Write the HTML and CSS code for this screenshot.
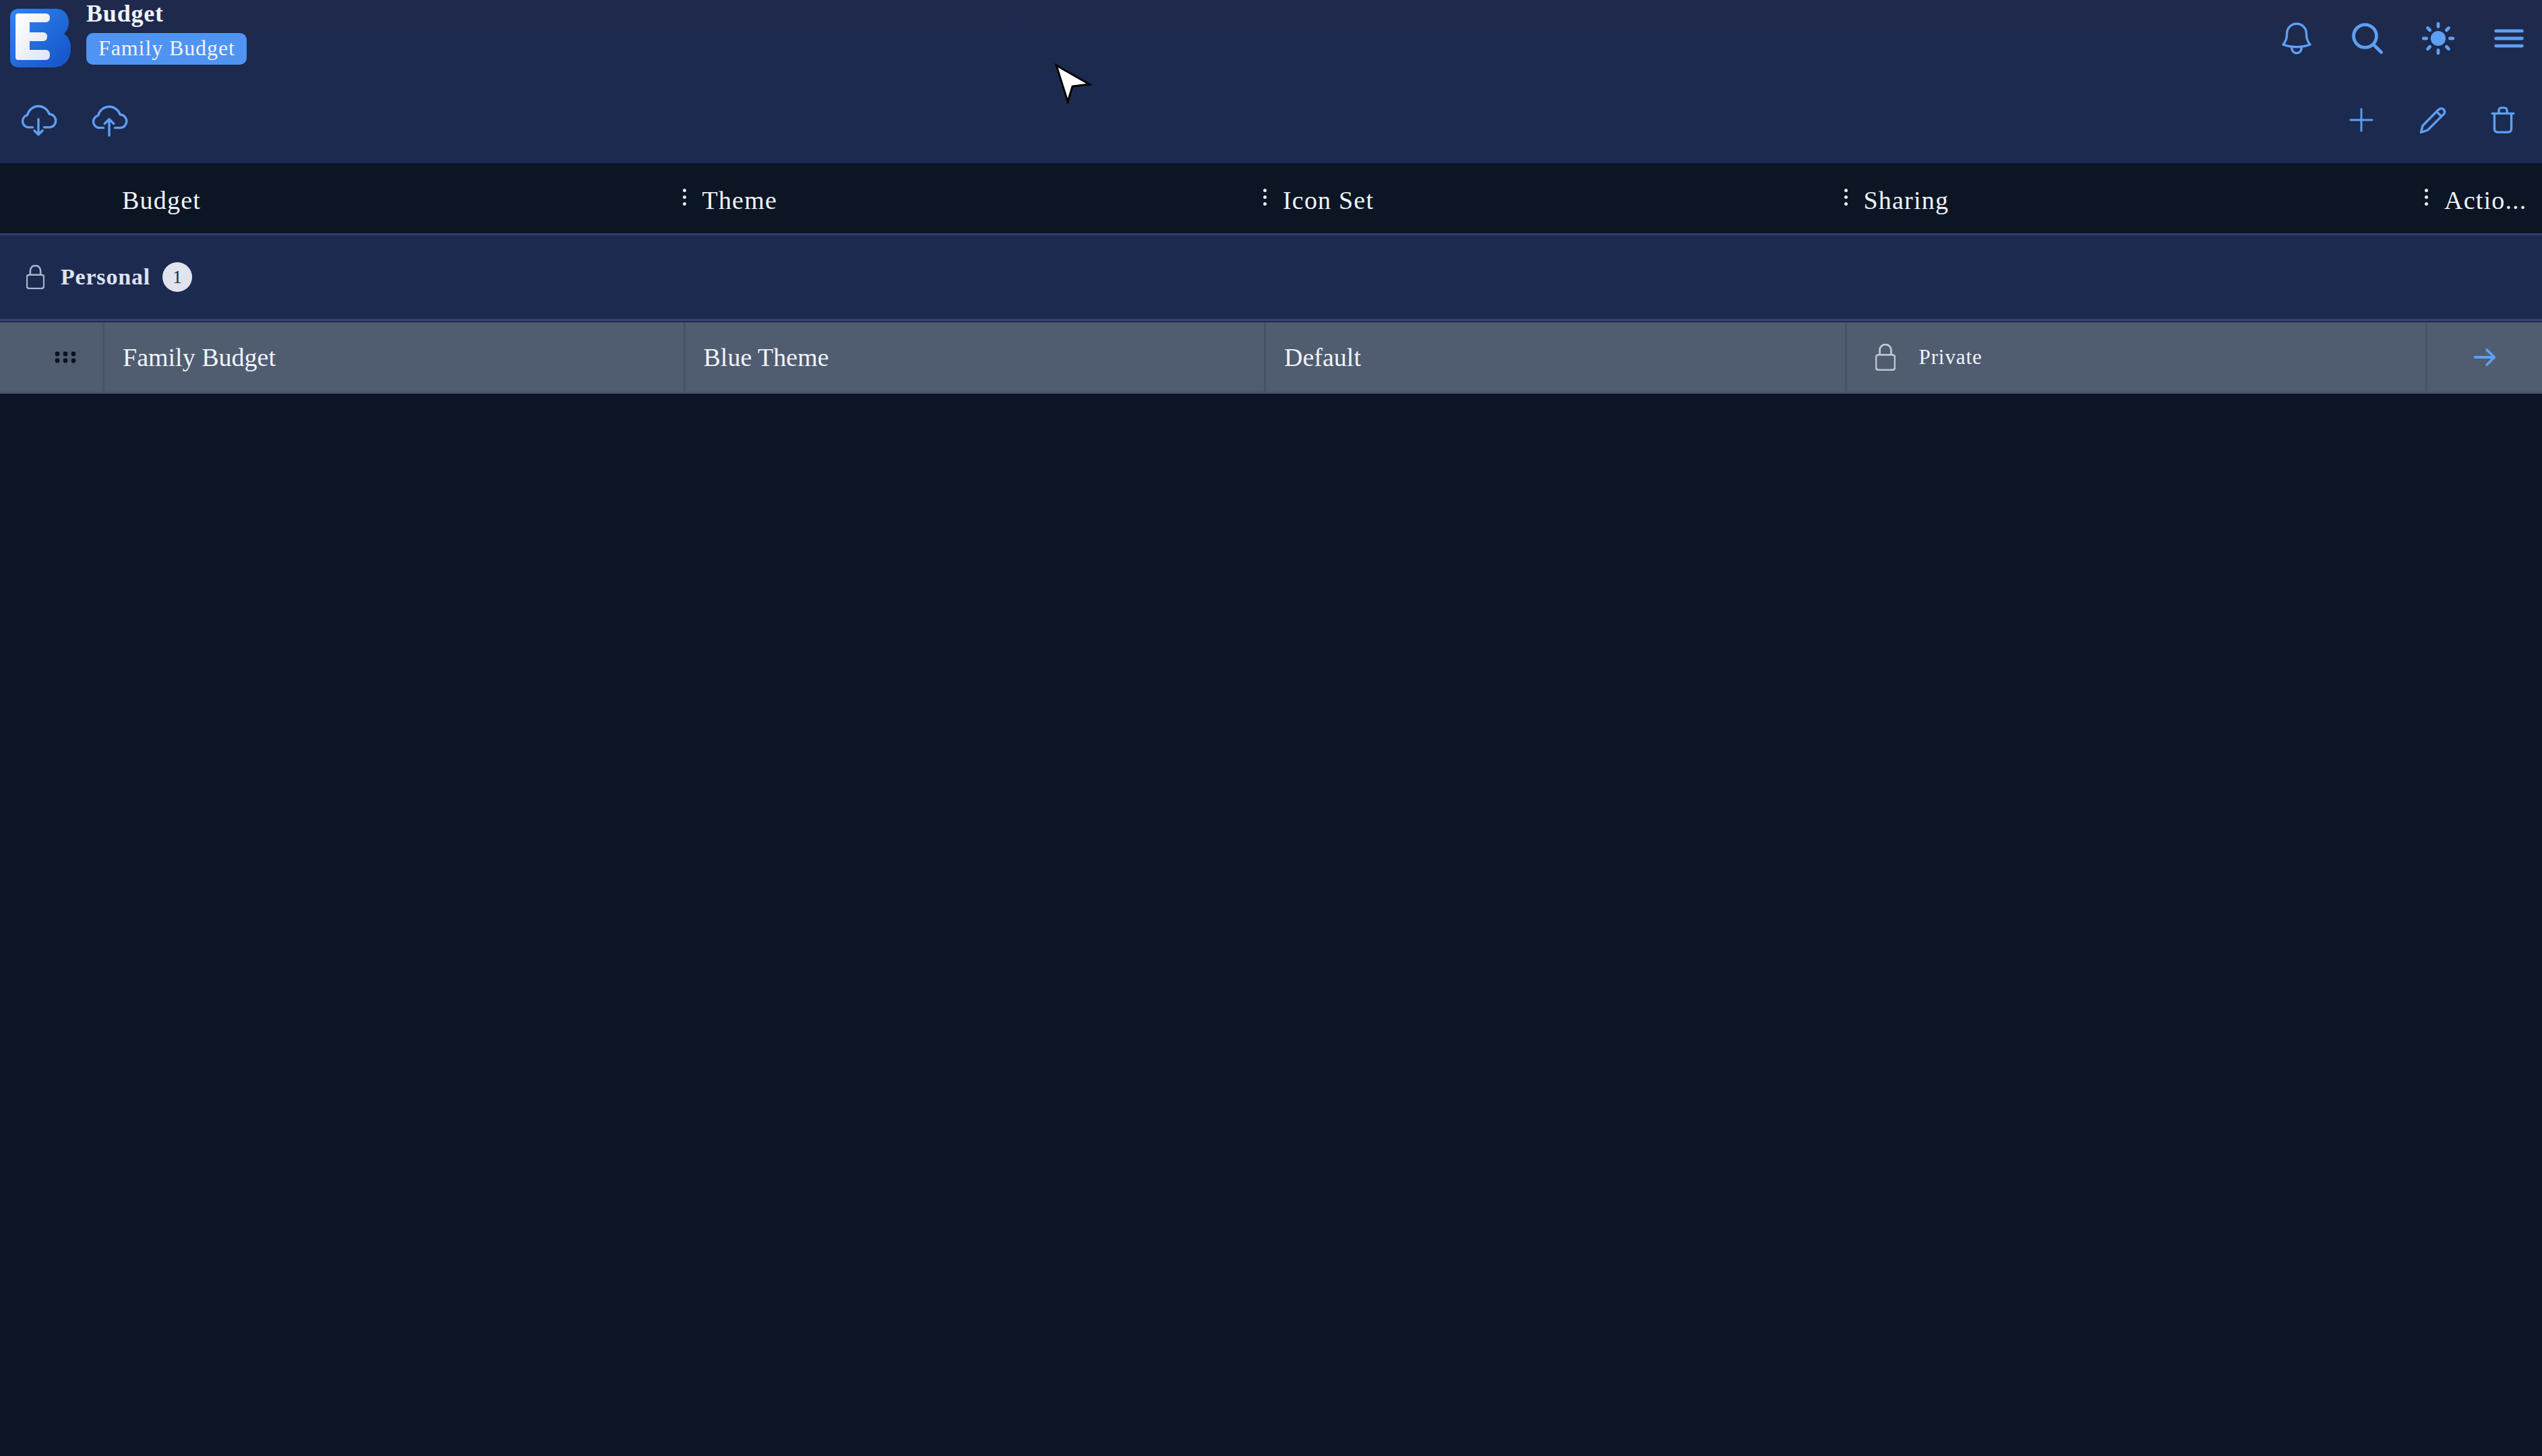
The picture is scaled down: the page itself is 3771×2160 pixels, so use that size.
FILE: index.html
```html
<!DOCTYPE html>
<html lang="en">
<head>
<meta charset="utf-8">
<title>Budget</title>
<link rel="stylesheet" href="styles.css">
</head>
<body>
<header class="topbar">
  <div class="toprow">
    <div class="brand">
      <svg class="logo" viewBox="0 0 92 90">
        <defs>
          <linearGradient id="lg" x1="0" y1="0" x2="1" y2="1"><stop offset="0" stop-color="#2f86f0"/><stop offset="1" stop-color="#1452c8"/></linearGradient>
          <linearGradient id="lw" x1="0" y1="0" x2="1" y2="1"><stop offset="0" stop-color="#ffffff"/><stop offset="1" stop-color="#dfe4f2"/></linearGradient>
        </defs>
        <path fill="url(#lg)" d="M14 1H68C82 1 88 10 88 22C88 29 85 34 81 38C87 42 91 49 91 60C91 78 80 88 64 88H14C6 88 1 83 1 75V14C1 6 6 1 14 1Z"/>
        <path fill="url(#lw)" d="M13 8H54Q60 8 60 14.500Q60 21 54 21H30V36H50Q56 36 56 42.500Q56 49 50 49H30V62H54Q60 62 60 69.500Q60 77 54 77H13Q9 77 9 73V12Q9 8 13 8Z"/>
      </svg>
      <div class="titles">
        <div class="title">Budget</div>
        <div class="badge">Family Budget</div>
      </div>
    </div>
    <div class="icons">
      <button class="iconbtn"><svg viewBox="0 0 24 24"><path d="M14.86 17.08a24 24 0 0 0 5.45-1.31A8.97 8.97 0 0 1 18 9.75V9a6 6 0 0 0-12 0v.75a8.97 8.97 0 0 1-2.31 6.02 24 24 0 0 0 5.45 1.31m5.72 0a24.25 24.25 0 0 1-5.72 0m5.72 0a3 3 0 1 1-5.72 0"/></svg></button>
      <button class="iconbtn"><svg class="heavy" viewBox="0 0 24 24"><path d="m20.500 20.500-5-5m0 0A7 7 0 1 0 5.600 5.600a7 7 0 0 0 9.900 9.900Z"/></svg></button>
      <button class="iconbtn"><svg class="heavy" viewBox="0 0 24 24"><circle class="solid" cx="12" cy="12" r="4.600"/><path d="M12 3v1.800M12 19.200V21M3 12h1.800M19.200 12H21M5.600 5.600l1.300 1.300M17.100 17.100l1.300 1.300M5.600 18.400l1.300-1.300M17.100 6.900l1.300-1.300"/></svg></button>
      <button class="iconbtn"><svg class="heavy" viewBox="0 0 24 24"><path d="M4 7.400h16M4 12h16M4 16.600h16"/></svg></button>
    </div>
  </div>
  <div class="toolrow">
    <div class="tools">
      <button class="iconbtn"><svg viewBox="0 0 24 24"><path d="M8.500 16.500H6a3.800 3.800 0 0 1-.8-7.500 7 7 0 0 1 13.500-.6 4 4 0 0 1-.2 8.100H15.500M12 11.500V21m0 0-2.500-2.500M12 21l2.500-2.500"/></svg></button>
      <button class="iconbtn"><svg viewBox="0 0 24 24"><path d="M8.500 16.800H6a3.800 3.800 0 0 1-.8-7.500 7 7 0 0 1 13.500-.6 4 4 0 0 1-.2 8.100H15.500M12 21.500V11.500m0 0-2.800 2.800m2.800-2.800 2.800 2.800"/></svg></button>
    </div>
    <div class="tools">
      <button class="iconbtn"><svg class="thin" viewBox="0 0 24 24"><path d="M12 5.300v13.400M5.300 12h13.400"/></svg></button>
      <button class="iconbtn"><svg viewBox="0 0 24 24"><path d="M15.300 6.200 16.600 5.200a2.100 2.100 0 0 1 2.800 2.900L9.300 18.200 5.200 19.600 6.200 15.500 15.300 6.200ZM14.700 6.800l3 3"/></svg></button>
      <button class="iconbtn"><svg viewBox="0 0 24 24"><path d="M5.400 8h13.200M6.800 8v9.500a2 2 0 0 0 2 2h6.400a2 2 0 0 0 2-2V8M9.500 8V6a1.500 1.500 0 0 1 1.500-1.500h2A1.500 1.500 0 0 1 14.500 6v2"/></svg></button>
    </div>
  </div>
</header>

<main class="table">
  <div class="grid head">
    <div class="hcell"></div>
    <div class="hcell first">Budget</div>
    <div class="hcell"><span class="kebab"></span>Theme</div>
    <div class="hcell"><span class="kebab"></span>Icon Set</div>
    <div class="hcell"><span class="kebab"></span>Sharing</div>
    <div class="hcell"><span class="kebab"></span>Actio...</div>
  </div>
  <div class="group">
    <svg class="lock muted" viewBox="4 1.800 16 21.300"><path d="M7.500 10.500V6.800a4.500 4.500 0 0 1 9 0v3.700M6.500 10.500h11a2 2 0 0 1 2 2v8a2 2 0 0 1-2 2h-11a2 2 0 0 1-2-2v-8a2 2 0 0 1 2-2Z"/></svg>
    <span class="gname">Personal</span>
    <span class="count">1</span>
  </div>
  <div class="grid row">
    <div class="cell drag"><svg viewBox="0 0 32 18"><g class="dots"><circle cx="4" cy="4" r="3.400"/><circle cx="16" cy="4" r="3.400"/><circle cx="28" cy="4" r="3.400"/><circle cx="4" cy="14" r="3.400"/><circle cx="16" cy="14" r="3.400"/><circle cx="28" cy="14" r="3.400"/></g></svg></div>
    <div class="cell">Family Budget</div>
    <div class="cell">Blue Theme</div>
    <div class="cell">Default</div>
    <div class="cell share">
      <svg class="lock plain" viewBox="4 1.800 16 21.300"><path d="M7.500 10.500V6.800a4.500 4.500 0 0 1 9 0v3.700M6.500 10.500h11a2 2 0 0 1 2 2v8a2 2 0 0 1-2 2h-11a2 2 0 0 1-2-2v-8a2 2 0 0 1 2-2Z"/></svg>
      <span class="private">Private</span>
    </div>
    <div class="cell action"><svg viewBox="0 0 24 24"><path d="M3 12h18m0 0-7-7m7 7-7 7"/></svg></div>
  </div>
</main>

<svg class="cursor" viewBox="0 0 60 64"><path d="M6 6 55 34 30 37 23 60Z"/></svg>
</body>
</html>
```
FILE: styles.css
```css
* { box-sizing: border-box; }
html, body { height: 100%; }
body {
  margin: 0;
  background: #0d1527;
  color: #f1f4fa;
  font-family: "Liberation Serif", "DejaVu Serif", serif;
  font-size: 38px;
  overflow: hidden;
  position: relative;
}
.topbar {
  height: 242px;
  background: linear-gradient(180deg, #1f294c 0%, #1b2a4e 50%, #1c2a50 100%);
  display: flex;
  flex-direction: column;
}
.toprow {
  height: 120px;
  display: flex;
  justify-content: space-between;
  align-items: flex-start;
  padding-left: 14px;
  padding-right: 20px;
}
.brand { display: flex; gap: 22px; }
.logo { width: 92px; height: 90px; margin-top: 12px; display: block; }
.titles { display: flex; flex-direction: column; align-items: flex-start; }
.title { font-weight: 700; font-size: 36px; line-height: 42px; margin-top: -1px; height: 50px; letter-spacing: .8px; }
.badge {
  background: #4f93f3;
  border-radius: 10px;
  height: 47px;
  line-height: 45px;
  padding: 0 17px 0 18px;
  font-size: 32px;
  letter-spacing: .9px;
  white-space: nowrap;
}
.icons { display: flex; gap: 47px; margin-top: 28px; }
.toolrow {
  height: 122px;
  display: flex;
  justify-content: space-between;
  padding: 29px 29px 0 28px;
}
.tools { display: flex; gap: 47px; }
.iconbtn {
  background: none;
  border: 0;
  padding: 0;
  width: 58px;
  height: 58px;
  display: block;
}
.iconbtn svg, .action svg, .lock {
  width: 100%;
  height: 100%;
  display: block;
  fill: none;
  stroke: #5e9ff3;
  stroke-width: 1.400;
  stroke-linecap: round;
  stroke-linejoin: round;
}
.iconbtn svg.thin { stroke-width: 1.200; }
.iconbtn svg.heavy { stroke-width: 2; }
.iconbtn svg .solid { fill: #5e9ff3; stroke: none; }

.grid {
  display: grid;
  grid-template-columns: 152px repeat(4, 861.500px) 1fr;
}
.head {
  height: 104px;
  background: #0c1524;
}
.hcell {
  position: relative;
  padding-left: 28px;
  line-height: 110px;
  white-space: nowrap;
  letter-spacing: 1.200px;
}
.hcell.first { padding-left: 29px; }
.kebab {
  position: absolute;
  left: -1px;
  top: 38px;
  width: 5px;
  height: 5px;
  border-radius: 50%;
  background: #e8ecf4;
  box-shadow: 0 10px 0 #e8ecf4, 0 20px 0 #e8ecf4;
}
.group {
  height: 131px;
  border-top: 3px solid #313d6c;
  border-bottom: 4px solid #343f70;
  background: #1d2a50;
  display: flex;
  align-items: center;
  padding-left: 39px;
}
.lock.muted { width: 27px; height: 36px; stroke: #aab4cb; stroke-width: 1.500; margin-right: 24px; }
.gname { font-weight: 700; font-size: 34px; color: #dde3f0; letter-spacing: .8px; }
.count {
  width: 44px;
  height: 44px;
  border-radius: 50%;
  background: #e1e4ec;
  color: #27303f;
  margin-left: 18px;
  font-size: 28px;
  line-height: 44px;
  text-align: center;
}
.row {
  height: 106px;
  margin-top: 1px;
  background: #505c70;
  border-bottom: 3px solid #46536a;
}
.cell {
  border-left: 3px solid #465367;
  padding-left: 27px;
  display: flex;
  align-items: center;
  white-space: nowrap;
}
.cell.drag { border-left: 0; justify-content: flex-end; padding: 0 39px 0 0; }
.drag svg { width: 32px; height: 18px; display: block; }
.dots { fill: #0a1120; }
.share { padding-left: 42px; }
.lock.plain { width: 30px; height: 40px; stroke: #bdc5d3; stroke-width: 1.500; margin-right: 35px; }
.private { font-size: 31px; letter-spacing: .9px; }
.action { padding-left: 0; justify-content: center; }
.action svg { width: 38px; height: 38px; stroke-width: 2.400; }
.cursor {
  position: absolute;
  left: 1561px;
  top: 91px;
  width: 60px;
  height: 64px;
  fill: #fff;
  stroke: #000;
  stroke-width: 3;
  stroke-linejoin: miter;
}
```
